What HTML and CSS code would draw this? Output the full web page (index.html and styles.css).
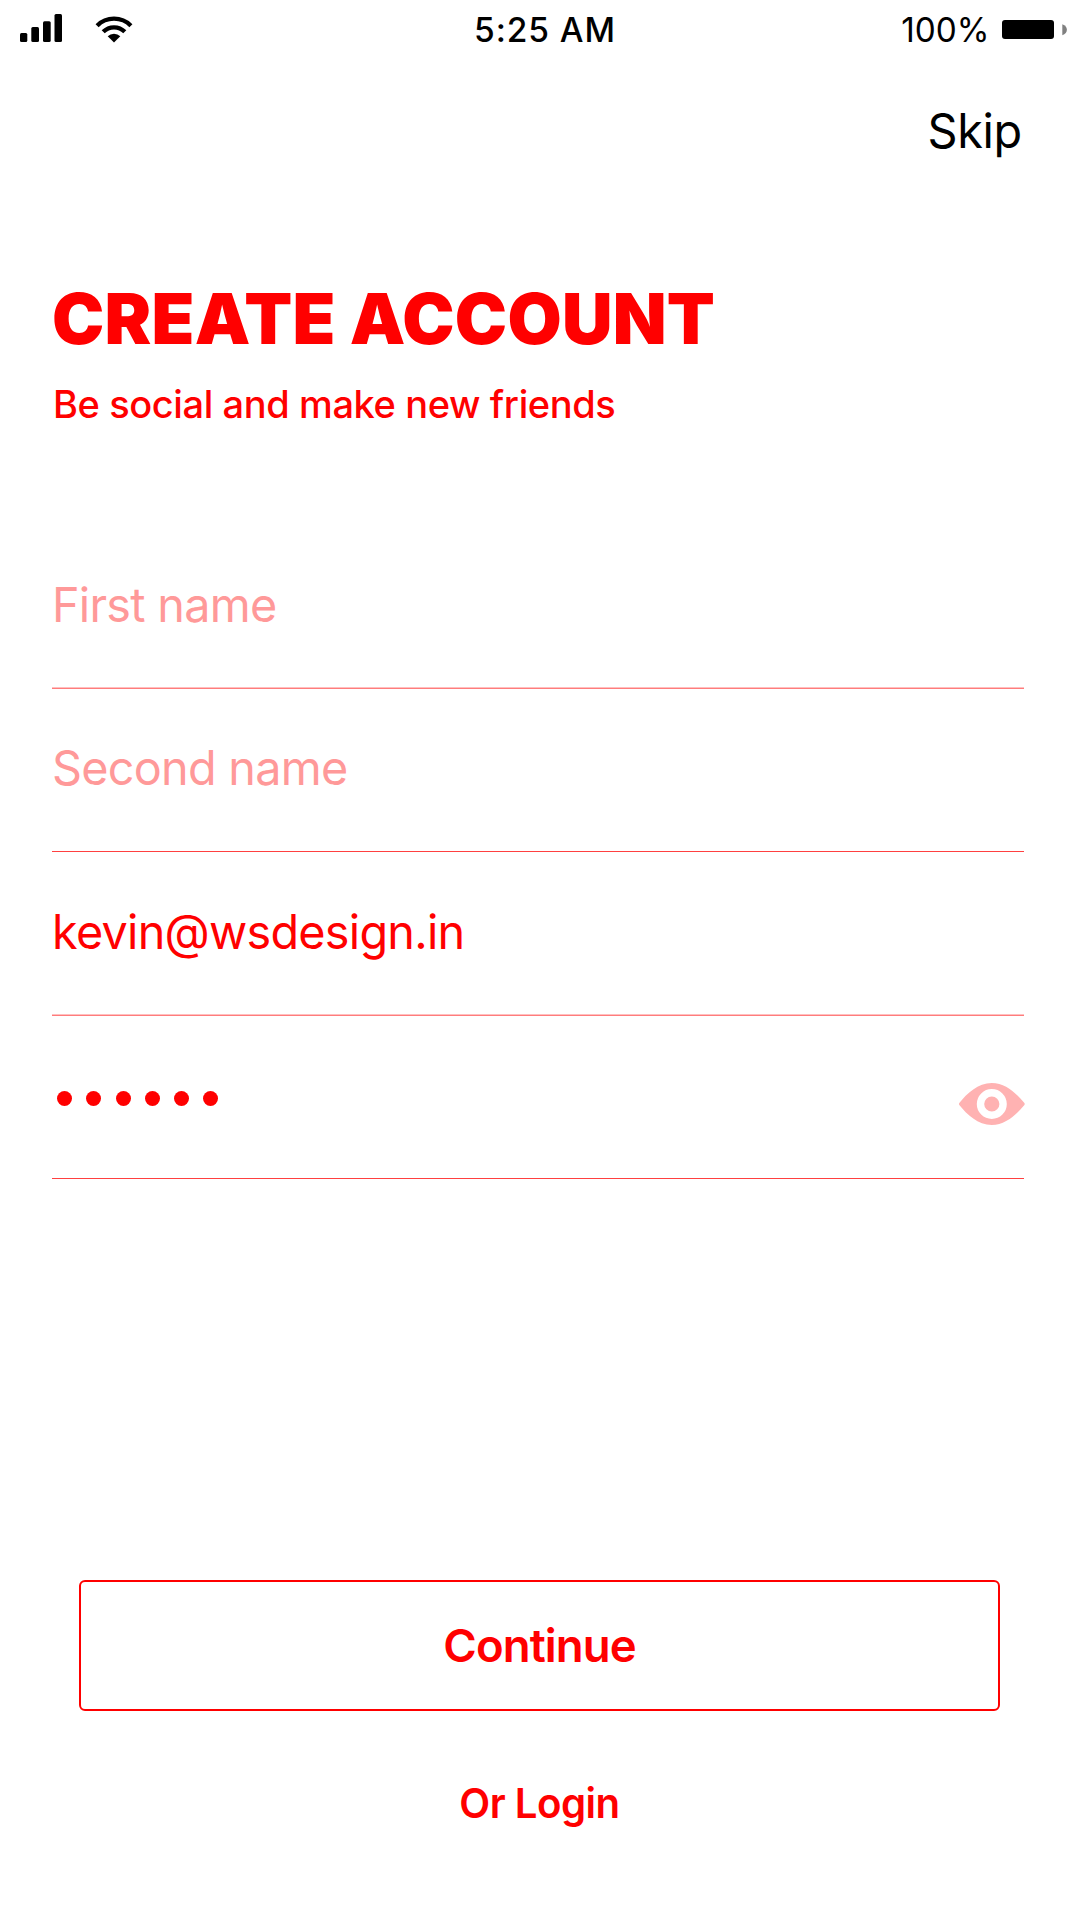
FILE: index.html
```html
<!DOCTYPE html>
<html lang="en">
<head>
<meta charset="utf-8">
<title>Create Account</title>
<link rel="stylesheet" href="styles.css">
</head>
<body>
<div class="screen">
  <header class="status">
    <div class="status-left">
      <svg class="signal" width="42" height="28" viewBox="0 0 42 28">
        <rect x="0" y="19" width="7.3" height="9" rx="1.5"/>
        <rect x="11.3" y="13" width="7.7" height="15" rx="1.5"/>
        <rect x="23" y="7.3" width="7.7" height="20.7" rx="1.5"/>
        <rect x="34.5" y="0" width="7.5" height="28" rx="1.5"/>
      </svg>
      <svg class="wifi" width="38" height="27" viewBox="0 0 38 27">
        <g fill="none" stroke="#000" stroke-width="4.3">
          <path d="M2.1 9.7A23.9 23.9 0 0 1 35.9 9.7"/>
          <path d="M8.2 15.8A15.2 15.2 0 0 1 29.8 15.8"/>
        </g>
        <path d="M12.7 20.3A8.9 8.9 0 0 1 25.3 20.3L19 26.6Z"/>
      </svg>
    </div>
    <span class="time">5:25 AM</span>
    <div class="status-right">
      <span class="percent">100%</span>
      <svg class="battery" width="66" height="19" viewBox="0 0 66 19">
        <rect x="0" y="0" width="52" height="19" rx="3"/>
        <path d="M60.3 4.3C66.4 6 66.4 13.6 60.3 15.3Z" fill="#808080"/>
      </svg>
    </div>
  </header>
  <nav class="nav"><a class="skip">Skip</a></nav>
  <main class="content">
    <h1 class="title">CREATE ACCOUNT</h1>
    <p class="subtitle">Be social and make new friends</p>
    <form class="form">
      <div class="field soft-line"><span class="placeholder">First name</span></div>
      <div class="field"><span class="placeholder">Second name</span></div>
      <div class="field soft-line email-field"><span class="email">kevin@wsdesign.in</span></div>
      <div class="field password-field">
        <div class="dots"><i></i><i></i><i></i><i></i><i></i><i></i></div>
        <svg class="eye" width="66" height="42" viewBox="0 0 66 42">
          <path fill="#ffb2b2" fill-rule="evenodd" d="M.3 20C8 10.500 19 0 32.800 0S57.500 10.500 65.400 20Q66 21 65.400 22C57.500 31.500 46.600 42 32.800 42S8 31.500 .3 22Q-.3 21 .3 20ZM32.800 6a15 15 0 1 0 0 30a15 15 0 1 0 0-30ZM32.800 13.400a7.600 7.600 0 1 1 0 15.200a7.600 7.600 0 1 1 0-15.200Z"/>
        </svg>
      </div>
    </form>
  </main>
  <footer class="actions">
    <div class="continue"><span>Continue</span></div>
    <a class="login">Or Login</a>
  </footer>
</div>
</body>
</html>
```

FILE: styles.css
```css
* { box-sizing: border-box; }
body {
  margin: 0;
  background: #fff;
  color: #000;
  font-family: Inter, "Liberation Sans", sans-serif;
}
svg { display: block; }
.screen {
  width: 1080px;
  height: 1920px;
  overflow: hidden;
  display: flex;
  flex-direction: column;
}
.status {
  height: 60px;
  flex: none;
  display: grid;
  grid-template-columns: 400px 1fr 400px;
  line-height: 60px;
}
.status-left { display: flex; padding: 14px 0 0 20px; gap: 33.300px; }
.wifi { margin-top: 1.500px; }
.time { text-align: center; font-size: 33.500px; font-weight: 500; letter-spacing: .9px; padding-left: 10px; white-space: nowrap; }
.status-right { display: flex; justify-content: flex-end; padding-right: 12px; gap: 12.500px; }
.percent { font-size: 33.300px; }
.battery { margin-top: 20px; }
.nav {
  height: 141px;
  flex: none;
  display: flex;
  justify-content: flex-end;
  align-items: center;
  padding-right: 58px;
}
.skip { font-size: 48px; letter-spacing: -.3px; transform: scaleX(.975); transform-origin: right; }
.content { padding: 75px 56px 0 52px; color: #f00; }
.title { margin: 0; padding-top: 1px; font-size: 70px; line-height: 84px; font-weight: 900; letter-spacing: .25px; white-space: nowrap; }
.subtitle { margin: 20px 0 0; padding-left: 1px; font-size: 38px; line-height: 46px; font-weight: 500; letter-spacing: -.4px; white-space: nowrap; }
.form { margin-top: 99px; }
.field {
  height: 163px;
  display: flex;
  justify-content: space-between;
  border-bottom: 1px solid #ff4040;
  font-size: 48px;
  line-height: 157px;
}
.soft-line { border-bottom-color: #ff7c7c; box-shadow: inset 0 -1px #ffbfbf; }
.email-field { height: 164px; line-height: 159px; }
.placeholder, .email { margin-left: -.5px; letter-spacing: -.75px; transform: scaleX(.974); transform-origin: left; }
.placeholder { color: #ff9999; }
.dots { display: flex; gap: 14.300px; padding: 75px 0 0 5px; }
.dots i { width: 15px; height: 15px; border-radius: 50%; background: #f00; }
.eye { margin: 67px -1px 0 0; }
.actions {
  margin-top: 401px;
  padding-left: 79px;
  color: #f00;
  font-weight: 600;
}
.continue {
  width: 921px;
  height: 131px;
  border: 2px solid #f00;
  border-radius: 6px;
  line-height: 127px;
  text-align: center;
  font-size: 45.500px;
  letter-spacing: -.9px;
}
.login { display: block; width: 921px; margin-top: 62px; line-height: 60px; font-size: 41px; letter-spacing: -.5px; transform: scaleX(.98); text-align: center; }
```
